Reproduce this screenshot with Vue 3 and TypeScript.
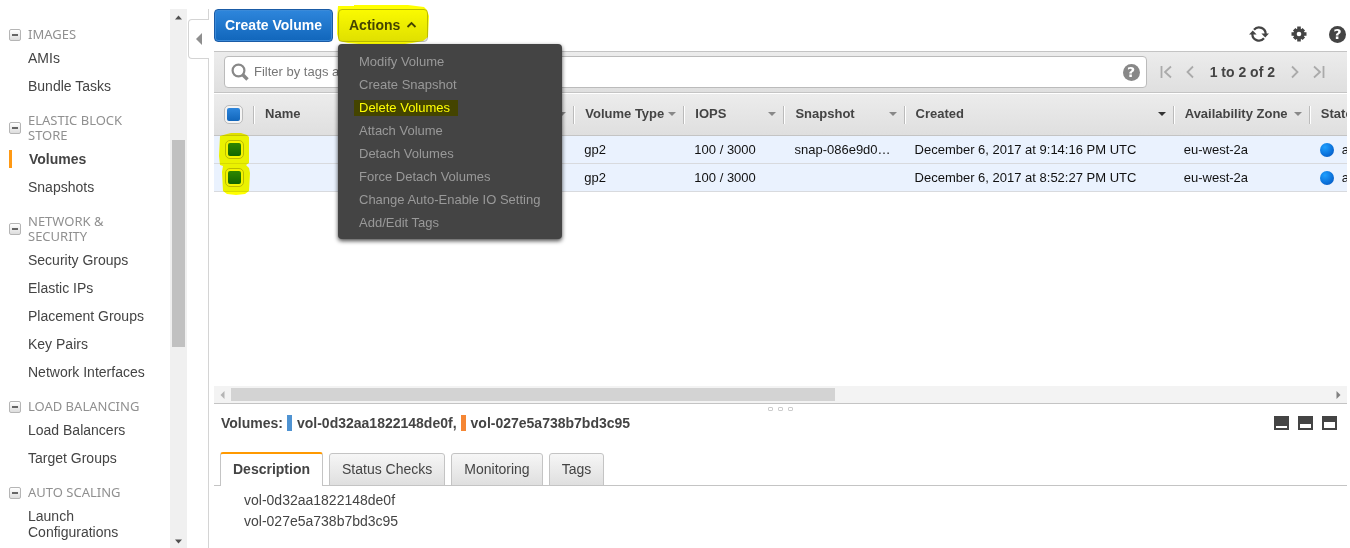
<script setup lang="ts">
import { ref } from 'vue'

interface Section {
  title: string
  items: string[]
}

interface Column {
  label: string
  width: number
  sortable: boolean
  sorted?: boolean
}

interface Volume {
  id: string
  type: string
  iops: string
  snapshot: string
  created: string
  zone: string
  state: string
  selected: boolean
  color: string
}

const sections: Section[] = [
  { title: 'IMAGES', items: ['AMIs', 'Bundle Tasks'] },
  { title: 'ELASTIC BLOCK STORE', items: ['Volumes', 'Snapshots'] },
  {
    title: 'NETWORK & SECURITY',
    items: ['Security Groups', 'Elastic IPs', 'Placement Groups', 'Key Pairs', 'Network Interfaces'],
  },
  { title: 'LOAD BALANCING', items: ['Load Balancers', 'Target Groups'] },
  { title: 'AUTO SCALING', items: ['Launch Configurations'] },
]

const columns: Column[] = [
  { label: 'Name', width: 320, sortable: true },
  { label: 'Volume Type', width: 110, sortable: true },
  { label: 'IOPS', width: 100, sortable: true },
  { label: 'Snapshot', width: 120, sortable: true },
  { label: 'Created', width: 269, sortable: true, sorted: true },
  { label: 'Availability Zone', width: 136, sortable: true },
  { label: 'State', width: 140, sortable: false },
]

const volumes = ref<Volume[]>([
  {
    id: 'vol-0d32aa1822148de0f',
    type: 'gp2',
    iops: '100 / 3000',
    snapshot: 'snap-086e9d0…',
    created: 'December 6, 2017 at 9:14:16 PM UTC',
    zone: 'eu-west-2a',
    state: 'available',
    selected: true,
    color: 'blue',
  },
  {
    id: 'vol-027e5a738b7bd3c95',
    type: 'gp2',
    iops: '100 / 3000',
    snapshot: '',
    created: 'December 6, 2017 at 8:52:27 PM UTC',
    zone: 'eu-west-2a',
    state: 'available',
    selected: true,
    color: 'orange',
  },
])

const actions: string[] = [
  'Modify Volume',
  'Create Snapshot',
  'Delete Volumes',
  'Attach Volume',
  'Detach Volumes',
  'Force Detach Volumes',
  'Change Auto-Enable IO Setting',
  'Add/Edit Tags',
]

const tabs: string[] = ['Description', 'Status Checks', 'Monitoring', 'Tags']

const activeItem = ref('Volumes')
const activeTab = ref('Description')
const menuOpen = ref(true)
const allSelected = ref(true)
const filter = ref('')
</script>

<template>
  <div class="page">
    <aside class="sidebar">
      <nav class="nav">
        <section v-for="s in sections" :key="s.title">
          <h2 class="nav-title">
            <button class="fold" type="button" :aria-label="'Collapse ' + s.title"></button>
            <span>{{ s.title }}</span>
          </h2>
          <a
            v-for="item in s.items"
            :key="item"
            href="#"
            class="nav-item"
            :class="{ active: item === activeItem }"
            @click.prevent="activeItem = item"
          >{{ item }}</a>
        </section>
      </nav>
      <div class="vscroll" aria-hidden="true">
        <svg width="9" height="5" viewBox="0 0 9 5"><path d="M4.500 0.500L8 4.500H1Z" fill="#505050" /></svg>
        <div class="vtrack"><div class="vthumb"></div></div>
        <svg width="9" height="5" viewBox="0 0 9 5"><path d="M1 .5H8L4.500 4.500Z" fill="#505050" /></svg>
      </div>
    </aside>

    <div class="divider">
      <button class="collapse" type="button" aria-label="Hide navigation">
        <svg width="6" height="12" viewBox="0 0 6 12"><path d="M6 0V12L0 6Z" fill="#8e8e8e" /></svg>
      </button>
    </div>

    <main class="main">
      <header class="toolbar">
        <button class="btn primary" type="button">Create Volume</button>
        <div class="dropdown">
          <button class="btn plain" type="button" :aria-expanded="menuOpen" @click="menuOpen = !menuOpen">
            Actions
            <svg width="11" height="7" viewBox="0 0 11 7"><path d="M1.500 6L5.500 2L9.500 6" fill="none" stroke="#444" stroke-width="1.800" /></svg>
          </button>
          <svg class="marker" width="94" height="42" viewBox="0 0 94 42" aria-hidden="true">
            <path d="M2 2L18 2L18 1L72 1L88 3L91 6L93 12L92 33L87 37L76 39L62 41L34 41L12 39L3 37L1 30L1 14Z" fill="#ffff00" />
          </svg>
          <div v-if="menuOpen" class="menu" role="menu">
            <button
              v-for="a in actions"
              :key="a"
              type="button"
              role="menuitem"
              class="menu-item"
            ><span :class="{ marked: a === 'Delete Volumes' }">{{ a }}</span></button>
          </div>
        </div>
        <div class="tools">
          <button type="button" class="icon" aria-label="Refresh">
            <svg width="20" height="18" viewBox="0 0 20 18">
              <path d="M5 4.700A6.600 6.600 0 0 1 16.600 9.500M15 13.300A6.600 6.600 0 0 1 3.400 8.500" fill="none" stroke="#444" stroke-width="2.200" />
              <path d="M0 9.500L3.800 5.500L7.600 9.500Z" fill="#444" />
              <path d="M12.400 8.500H20L16.200 12.500Z" fill="#444" />
            </svg>
          </button>
          <button type="button" class="icon" aria-label="Settings">
            <svg width="16" height="16" viewBox="0 0 16 16">
              <g stroke="#444" stroke-width="3.600">
                <path d="M8 .5V15.500M.5 8H15.500M3.200 3.200L12.800 12.800M12.800 3.200L3.200 12.800" />
              </g>
              <circle cx="8" cy="8" r="5.600" fill="#444" />
              <circle cx="8" cy="8" r="2.300" fill="#fff" />
            </svg>
          </button>
          <button type="button" class="help dark" aria-label="Help">?</button>
        </div>
      </header>

      <div class="filterbar">
        <label class="search">
          <svg width="18" height="18" viewBox="0 0 18 18">
            <circle cx="7.500" cy="7.500" r="5.900" fill="none" stroke="#888" stroke-width="2.200" />
            <path d="M11.800 11.800L16.500 16.500" stroke="#888" stroke-width="3.400" />
          </svg>
          <input
            v-model="filter"
            type="text"
            aria-label="Filter volumes"
            placeholder="Filter by tags and attributes or search by keyword"
          />
          <button type="button" class="help grey" aria-label="Filter help">?</button>
        </label>
        <div class="pager">
          <button type="button" class="icon" aria-label="First page">
            <svg width="12" height="14" viewBox="0 0 12 14"><path d="M1.500 1V13M11 1.500L5 7L11 12.500" fill="none" stroke="#aaa" stroke-width="1.800" /></svg>
          </button>
          <button type="button" class="icon" aria-label="Previous page">
            <svg width="8" height="14" viewBox="0 0 8 14"><path d="M7 1.500L1.500 7L7 12.500" fill="none" stroke="#aaa" stroke-width="1.800" /></svg>
          </button>
          <span class="range">1 to 2 of 2</span>
          <button type="button" class="icon" aria-label="Next page">
            <svg width="8" height="14" viewBox="0 0 8 14"><path d="M1 1.500L6.500 7L1 12.500" fill="none" stroke="#aaa" stroke-width="1.800" /></svg>
          </button>
          <button type="button" class="icon" aria-label="Last page">
            <svg width="12" height="14" viewBox="0 0 12 14"><path d="M10.500 1V13M1 1.500L7 7L1 12.500" fill="none" stroke="#aaa" stroke-width="1.800" /></svg>
          </button>
        </div>
      </div>

      <div class="viewport">
        <table class="grid">
          <colgroup>
            <col class="col-check" />
            <col v-for="c in columns" :key="c.label" :style="{ width: c.width + 'px' }" />
          </colgroup>
          <thead>
            <tr>
              <th class="check-cell">
                <input v-model="allSelected" type="checkbox" class="tick" aria-label="Select all volumes" />
              </th>
              <th v-for="c in columns" :key="c.label" scope="col">
                <div class="head">
                  <span>{{ c.label }}</span>
                  <i v-if="c.sortable" class="sort" :class="{ sorted: c.sorted }"></i>
                </div>
              </th>
            </tr>
          </thead>
          <tbody>
            <tr v-for="v in volumes" :key="v.id">
              <td class="check-cell">
                <input v-model="v.selected" type="checkbox" class="tick" :aria-label="'Select ' + v.id" />
              </td>
              <td></td>
              <td>{{ v.type }}</td>
              <td>{{ v.iops }}</td>
              <td>{{ v.snapshot }}</td>
              <td>{{ v.created }}</td>
              <td>{{ v.zone }}</td>
              <td><div class="state"><i class="dot"></i>{{ v.state }}</div></td>
            </tr>
          </tbody>
        </table>
        <svg class="rows-marker" width="32" height="64" viewBox="0 0 32 64" aria-hidden="true">
          <path d="M1 4L8 2L12 1L22 1L28 3L30 5L30 31L27 33L30 36L31 41L30 59L26 62L17 63L8 62L4 59L3 40L4 34L1 33L0 24Z" fill="#ffff00" />
        </svg>
      </div>

      <div class="hscroll" aria-hidden="true">
        <svg width="5" height="8" viewBox="0 0 5 8"><path d="M4.500 0V8L.5 4Z" fill="#b5b5b5" /></svg>
        <div class="htrack"><div class="hthumb"></div></div>
        <svg width="5" height="8" viewBox="0 0 5 8"><path d="M.5 0V8L4.500 4Z" fill="#808080" /></svg>
      </div>

      <section class="details">
        <div class="grip" aria-hidden="true"><i></i><i></i><i></i></div>
        <div class="summary">
          <span class="label">Volumes:</span>
          <template v-for="(v, i) in volumes" :key="v.id">
            <i class="swatch" :class="v.color"></i>
            <span class="vol">{{ v.id }}{{ i < volumes.length - 1 ? ',' : '' }}</span>
          </template>
          <div class="panes">
            <button type="button" class="pane low" aria-label="Minimize details"></button>
            <button type="button" class="pane mid" aria-label="Half height details"></button>
            <button type="button" class="pane high" aria-label="Maximize details"></button>
          </div>
        </div>
        <div class="tabs" role="tablist">
          <button
            v-for="t in tabs"
            :key="t"
            type="button"
            role="tab"
            class="tab"
            :class="{ current: t === activeTab }"
            :aria-selected="t === activeTab"
            @click="activeTab = t"
          >{{ t }}</button>
        </div>
        <ul class="ids">
          <li v-for="v in volumes" :key="v.id">{{ v.id }}</li>
        </ul>
      </section>
    </main>
  </div>
</template>

<style>
body {
  background: #fff;
}
</style>

<style scoped>
.page,
.page * {
  box-sizing: border-box;
}

.page {
  display: flex;
  min-height: 100vh;
  padding: 9px 3px 0 0;
  font-family: "Liberation Sans", Arial, sans-serif;
  font-size: 14px;
  line-height: 16px;
  color: #444;
}

button,
input {
  font: inherit;
  color: inherit;
  margin: 0;
}

button {
  padding: 0;
  border: 0;
  background: none;
}

svg {
  display: block;
  flex: none;
}

/* navigation */
.sidebar {
  display: flex;
  flex: none;
  width: 187px;
}

.nav {
  flex: 1;
  padding-top: 5px;
}

.nav-title {
  display: flex;
  align-items: center;
  gap: 7px;
  margin: 0;
  padding: 13px 16px 2px 9px;
  font: 13px/15px "Noto Sans", sans-serif;
  color: #909090;
}

.fold {
  display: flex;
  flex: none;
  align-items: center;
  justify-content: center;
  width: 12px;
  height: 12px;
  border: 1px solid #b5b5b5;
  border-radius: 2px;
  background: linear-gradient(#fff, #ddd);
}

.fold::before {
  content: "";
  width: 6px;
  height: 2px;
  background: #666;
}

.nav-item {
  display: flex;
  align-items: center;
  padding: 6px 20px 6px 28px;
  color: #444;
  text-decoration: none;
}

.nav-item.active {
  gap: 17px;
  padding: 5px 0 5px 9px;
  font-weight: bold;
}

.nav-item.active::before {
  content: "";
  width: 3px;
  height: 18px;
  background: #ff9914;
}

.vscroll {
  display: flex;
  flex-direction: column;
  align-items: center;
  flex: none;
  width: 17px;
  padding: 6px 0 4px;
  background: #f0f0f0;
}

.vtrack {
  flex: 1;
  width: 13px;
  padding: 120px 0 10px;
}

.vthumb {
  height: 207px;
  background: #c1c1c1;
}

.divider {
  position: relative;
  flex: none;
  width: 22px;
  margin-right: 5px;
  border-right: 1px solid #d4d4d4;
}

.collapse {
  position: absolute;
  top: 10px;
  right: -1px;
  display: flex;
  align-items: center;
  justify-content: center;
  width: 21px;
  height: 40px;
  border: 1px solid #d4d4d4;
  border-right: 0;
  border-radius: 4px 0 0 4px;
  background: #fff;
}

/* toolbar */
.main {
  display: flex;
  flex: 1;
  flex-direction: column;
  min-width: 0;
}

.toolbar {
  display: flex;
  gap: 5px;
  height: 42px;
}

.btn {
  display: flex;
  align-items: center;
  height: 33px;
  padding: 0 10px 2px;
  border: 1px solid;
  border-radius: 4px;
  font-weight: bold;
}

.primary {
  border-color: #1a5ba6;
  background: linear-gradient(#2e86dc, #1166bb);
  box-shadow: inset 0 0 0 1px #3b8ad8;
  color: #fff;
}

.plain {
  gap: 6px;
  border-color: #bbb;
  background: linear-gradient(#fafafa, #e0e0e0);
}

.dropdown {
  position: relative;
}

.marker {
  position: absolute;
  top: -5px;
  left: -2px;
  mix-blend-mode: multiply;
  pointer-events: none;
}

.menu {
  position: absolute;
  z-index: 2;
  top: 35px;
  left: 0;
  display: flex;
  flex-direction: column;
  width: 224px;
  padding: 6px 0 5px;
  border-radius: 4px;
  background: #444;
  box-shadow: 0 2px 4px rgba(0, 0, 0, 0.7);
}

.menu-item {
  display: flex;
  align-items: center;
  height: 23px;
  padding: 0 16px;
  font-size: 13px;
  color: #999;
}

.menu-item span {
  padding: 0 5px;
}

.menu-item .marked {
  padding-right: 8px;
  background: #444400;
  color: #ffff00;
}

.tools {
  display: flex;
  align-items: center;
  gap: 22px;
  height: 50px;
  margin-left: auto;
  padding-right: 1px;
}

.help {
  flex: none;
  width: 17px;
  height: 17px;
  border-radius: 50%;
  font: bold 14px/17px "DejaVu Sans", sans-serif;
  text-align: center;
  color: #fff;
}

.dark {
  background: #444;
}

.grey {
  background: #888;
}

/* filter */
.filterbar {
  display: flex;
  align-items: center;
  gap: 13px;
  height: 42px;
  padding: 0 22px 0 10px;
  border: 1px solid #c4c4c4;
  border-width: 1px 0;
  background: linear-gradient(#ececec, #dfdfdf);
}

.search {
  display: flex;
  flex: 1;
  align-items: center;
  gap: 5px;
  height: 32px;
  padding: 0 6px;
  border: 1px solid #bbb;
  border-radius: 4px;
  background: #fff;
}

.search input {
  flex: 1;
  min-width: 0;
  padding: 0;
  border: 0;
  outline: 0;
  background: none;
  font-size: 13px;
}

.search input::placeholder {
  color: #777;
  opacity: 1;
}

.pager {
  display: flex;
  flex: none;
  align-items: center;
  gap: 14px;
}

.range {
  margin: 0 2px;
  font-weight: bold;
}

/* table */
.viewport {
  position: relative;
  flex: 1;
  min-height: 120px;
  overflow: hidden;
}

.grid {
  width: 1235px;
  min-width: 100%;
  table-layout: fixed;
  border-collapse: separate;
  border-spacing: 0;
  font-size: 13px;
}

.col-check {
  width: 39px;
}

th {
  height: 43px;
  padding: 0;
  border-top: 1px solid #fff;
  border-bottom: 1px solid #c4c4c4;
  background: linear-gradient(#ececec, #dfdfdf);
  text-align: left;
}

.head {
  display: flex;
  align-items: center;
  justify-content: space-between;
  height: 18px;
  padding: 0 7px 2px 11px;
  border-left: 1px solid #bbb;
  box-shadow: inset 1px 0 #fff;
}

.sort {
  border: 4px solid transparent;
  border-top-color: #888;
  border-bottom: 0;
}

.sorted {
  border-top-color: #333;
}

td {
  height: 28px;
  padding: 0 0 0 11px;
  border-bottom: 1px solid #d8dade;
  background: #eaf2fe;
  white-space: nowrap;
  color: #111;
}

th.check-cell {
  padding-left: 10px;
}

td.check-cell {
  padding-left: 11px;
}

.tick {
  appearance: none;
  display: flex;
  align-items: center;
  justify-content: center;
  width: 19px;
  height: 19px;
  border: 1px solid #bbb;
  border-radius: 5px;
  background: #f4f4f4;
}

.tick:checked::before {
  content: "";
  width: 13px;
  height: 13px;
  border-radius: 2px;
  background: linear-gradient(#2e86dc, #1166bb);
}

.state {
  display: flex;
  align-items: center;
  gap: 8px;
}

.dot {
  width: 14px;
  height: 14px;
  border-radius: 50%;
  background: radial-gradient(circle at 35% 30%, #1fa0ff, #0a6fd8 60%, #0a4fb4);
}

.rows-marker {
  position: absolute;
  top: 39px;
  left: 5px;
  mix-blend-mode: multiply;
  pointer-events: none;
}

.hscroll {
  display: flex;
  align-items: center;
  height: 18px;
  padding: 0 6px;
  border-bottom: 1px solid #c4c4c4;
  background: #f3f3f3;
}

.htrack {
  flex: 1;
  padding: 0 6px;
}

.hthumb {
  width: 55%;
  height: 13px;
  background: #d3d3d3;
}

/* details */
.details {
  position: relative;
  flex: none;
  min-height: 144px;
}

.grip {
  position: absolute;
  top: 3px;
  left: 0;
  right: 0;
  display: flex;
  justify-content: center;
  gap: 5px;
}

.grip i {
  width: 5px;
  height: 4px;
  border: 1px solid #ccc;
  border-radius: 1px;
}

.summary {
  display: flex;
  align-items: center;
  height: 38px;
  padding: 0 10px 0 7px;
  font-weight: bold;
}

.swatch {
  width: 5px;
  height: 16px;
  margin: 0 5px 0 4px;
}

.blue {
  background: #4f93d2;
}

.orange {
  background: #f58634;
}

.panes {
  display: flex;
  gap: 9px;
  margin-left: auto;
}

.pane {
  width: 15px;
  height: 14px;
  border: 2px solid #444;
  background: #fff;
}

.low {
  border-top-width: 10px;
}

.mid {
  border-top-width: 8px;
}

.high {
  border-top-width: 6px;
}

.tabs {
  display: flex;
  align-items: flex-end;
  gap: 6px;
  height: 44px;
  padding: 0 6px;
  background: linear-gradient(#c4c4c4, #c4c4c4) bottom / 100% 1px no-repeat;
}

.tab {
  height: 33px;
  padding: 0 12px 2px;
  border: 1px solid #c4c4c4;
  border-radius: 3px 3px 0 0;
  background: linear-gradient(#f6f6f6, #dfdfdf);
}

.current {
  height: 34px;
  border-top: 2px solid #ff9900;
  border-bottom: 0;
  background: #fff;
  font-weight: bold;
}

.ids {
  margin: 0;
  padding: 4px 0 0 30px;
  list-style: none;
  line-height: 21px;
}
</style>
